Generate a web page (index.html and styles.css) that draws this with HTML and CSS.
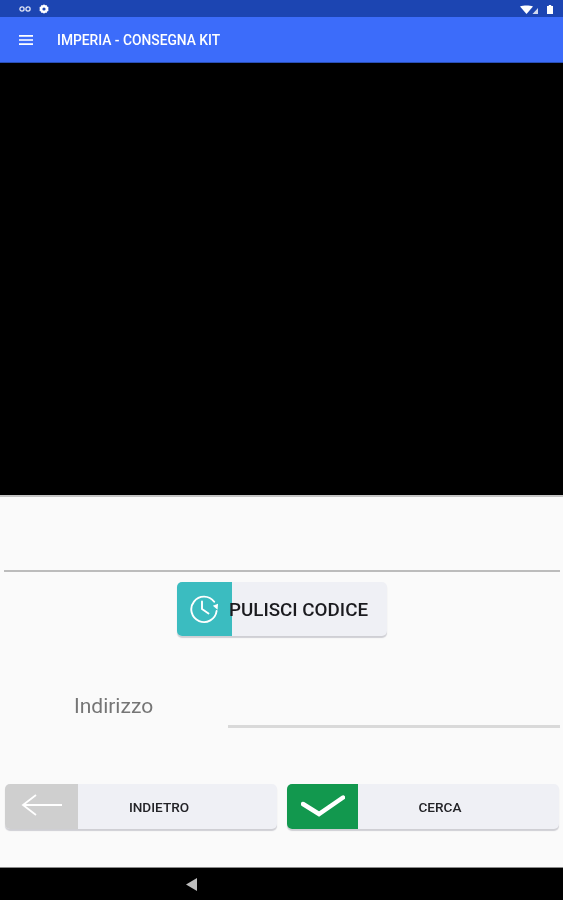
FILE: index.html
```html
<!DOCTYPE html>
<html lang="it">
<head>
<meta charset="utf-8">
<title>Imperia - Consegna Kit</title>
<link rel="stylesheet" href="styles.css">
</head>
<body>
<div class="screen">
  <div class="status">
    <div class="status-left">
      <svg viewBox="0 0 12 6" width="12" height="6"><circle cx="3" cy="3" r="2.1" fill="none" stroke="#dfe4f5" stroke-width="1.3"/><circle cx="9" cy="3" r="2.1" fill="none" stroke="#dfe4f5" stroke-width="1.3"/></svg>
      <svg viewBox="0 0 10 10" width="10" height="10"><path d="M5 .2 6.1 1.3 7.6.9 8 2.4 9.5 2.9 9.1 4.4 9.9 5 9.1 5.6 9.500 7.100 8 7.600 7.600 9.100 6.100 8.700 5 9.800 3.900 8.700 2.400 9.100 2 7.600.5 7.100.9 5.600.1 5 .9 4.400.5 2.900 2 2.400 2.400.9 3.900 1.300Z" fill="#fff"/><circle cx="5" cy="5" r="1.600" fill="#1c45b2"/></svg>
    </div>
    <div class="status-right">
      <svg viewBox="0 0 19 9" width="19" height="9"><path d="M0 1.500C3.500.2 9.500.2 13 1.500L6.500 9Z" fill="#fff"/><path d="M18 3V9H12.500Z" fill="#fff" opacity=".8"/></svg>
      <svg viewBox="0 0 6 9" width="6" height="9"><path d="M1.800 0H4.200V.9H6V9H0V.9H1.800Z" fill="#fff"/></svg>
    </div>
  </div>
  <header class="appbar">
    <svg viewBox="0 0 14 10" width="14" height="10"><path d="M0 .9H14M0 5H14M0 9.100H14" stroke="#fff" stroke-width="1.700"/></svg>
    <h1 class="title">IMPERIA - CONSEGNA KIT</h1>
  </header>
  <div class="camera"></div>
  <main class="panel">
    <div class="code-line"></div>
    <div class="clear-row">
      <button class="btn btn-clear">
        <span class="btn-icon teal">
          <svg viewBox="0 0 30 30" width="30" height="30"><path d="M25.200 7.800A12.700 12.700 0 1 0 27.600 17" fill="none" stroke="#fff" stroke-width="1.900" stroke-linecap="round"/><path d="M28.600 15.800 23.800 11.800 29 9.800Z" fill="#fff"/><path d="M13 7.500V15L19.500 19.500" fill="none" stroke="#fff" stroke-width="1.900" stroke-linecap="round" stroke-linejoin="round"/></svg>
        </span>
        <span class="clear-label">PULISCI CODICE</span>
      </button>
    </div>
    <div class="address-row">
      <label class="address-label">Indirizzo</label>
      <div class="address-input"></div>
    </div>
    <div class="actions">
      <button class="btn btn-action">
        <span class="btn-icon grey">
          <svg viewBox="0 0 41 22" width="41" height="22"><path d="M41 11H2M15 1 2 11 15 21" fill="none" stroke="#fff" stroke-width="1.800"/></svg>
        </span>
        <span class="action-label">INDIETRO</span>
      </button>
      <button class="btn btn-action">
        <span class="btn-icon green">
          <svg viewBox="0 0 44 24" width="44" height="24"><path d="M2 10 18 20 42 3.500" fill="none" stroke="#fff" stroke-width="4.500" stroke-linecap="round"/></svg>
        </span>
        <span class="action-label">CERCA</span>
      </button>
    </div>
  </main>
  <nav class="navbar">
    <svg viewBox="0 0 11 13" width="11" height="13"><path d="M11 0V13L0 6.500Z" fill="#bdbdbd"/></svg>
  </nav>
</div>
</body>
</html>
```
FILE: styles.css
```css
* { box-sizing: border-box; }
html, body { margin: 0; padding: 0; background: #000; }
.screen {
  width: 563px;
  height: 900px;
  display: flex;
  flex-direction: column;
  font-family: Roboto, "Liberation Sans", sans-serif;
  filter: blur(0.6px);
  overflow: hidden;
}
.status {
  height: 17px;
  flex: none;
  background: #1c45b2;
  display: flex;
  justify-content: space-between;
  align-items: center;
  padding: 1px 10px 0 19px;
}
.status-left, .status-right { display: flex; align-items: center; }
.status-left { gap: 8px; }
.status-right { gap: 8px; }
.appbar {
  height: 46px;
  flex: none;
  background: #3c6cfa;
  border-bottom: 1px solid #2a4fb5;
  display: flex;
  align-items: center;
  padding: 1px 0 0 19px;
}
.title {
  margin: 0 0 0 24px;
  font-size: 13.8px;
  font-weight: 500;
  color: #fff;
  white-space: nowrap;
}
.camera { height: 432px; flex: none; background: #000; }
.panel {
  height: 372px;
  flex: none;
  background: #fafafa;
  border-top: 2px solid #c4c4c4;
  display: flex;
  flex-direction: column;
  padding: 0 3px 0 4px;
}
.code-line {
  margin-top: 73px;
  height: 2px;
  flex: none;
  background: #bcbcbc;
}
.clear-row {
  display: flex;
  justify-content: center;
  margin-top: 10px;
}
.btn {
  display: flex;
  align-items: stretch;
  padding: 0;
  border: 0;
  background: #eff0f5;
  border-radius: 5px;
  box-shadow: 0 2px 1px #cfcfd4;
  font-family: inherit;
  overflow: hidden;
}
.btn-clear { width: 210px; height: 54px; }
.btn-icon {
  flex: none;
  display: flex;
  align-items: center;
  justify-content: center;
}
.teal { width: 55px; background: #3bbcc0; padding: 0 2px 0 0; }
.grey { width: 73px; background: #cfcfcf; padding-bottom: 3px; }
.green { width: 71px; background: #12984e; padding-bottom: 2px; }
.clear-label {
  margin-left: -3px;
  padding-top: 1px;
  align-self: center;
  font-size: 18.8px;
  font-weight: 500;
  color: #1b1b1f;
  white-space: nowrap;
}
.address-row {
  display: flex;
  align-items: flex-start;
  margin-top: 45px;
  height: 55px;
}
.address-label {
  margin: 13px 0 0 70px;
  font-size: 21px;
  color: #757575;
  width: 154px;
  flex: none;
}
.address-input {
  flex: 1;
  margin-top: 44px;
  height: 3px;
  background: #d9d9d9;
}
.actions {
  display: flex;
  justify-content: space-between;
  margin: 48px 1px 0 1px;
}
.btn-action { width: 272px; height: 45px; }
.action-label {
  flex: 1;
  align-self: center;
  font-size: 13.6px;
  font-weight: 500;
  color: #232327;
  text-align: center;
  padding-right: 37px;
}
.navbar {
  flex: 1;
  background: #000;
  display: flex;
  align-items: center;
  justify-content: center;
  padding: 0 181px 0 0;
  border-top: 1px solid #8a8a8a;
}
```
